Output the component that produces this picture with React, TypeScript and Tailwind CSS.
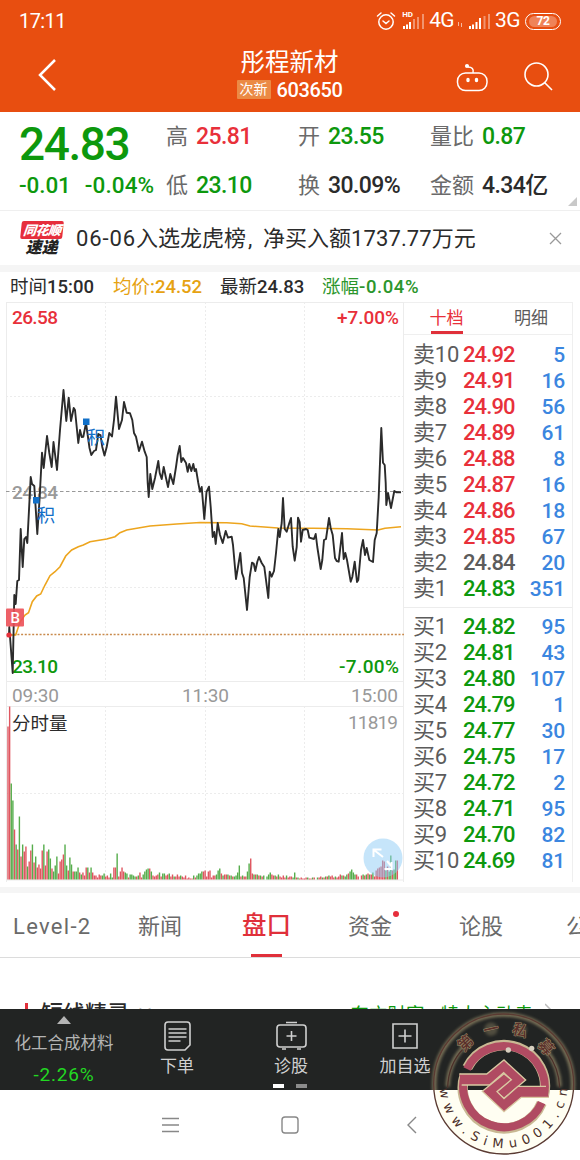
import { clsx } from "clsx";

interface Level {
    label: string,
    price: string,
    volume: string,
    tone: string,
}

const RED = "text-[#e8303a]";
const GREEN = "text-[#0d980d]";
const GRAY = "text-[#5c5c5c]";

const sells: Level[] = [
    { label: "卖10", price: "24.92", volume: "5", tone: RED },
    { label: "卖9", price: "24.91", volume: "16", tone: RED },
    { label: "卖8", price: "24.90", volume: "56", tone: RED },
    { label: "卖7", price: "24.89", volume: "61", tone: RED },
    { label: "卖6", price: "24.88", volume: "8", tone: RED },
    { label: "卖5", price: "24.87", volume: "16", tone: RED },
    { label: "卖4", price: "24.86", volume: "18", tone: RED },
    { label: "卖3", price: "24.85", volume: "67", tone: RED },
    { label: "卖2", price: "24.84", volume: "20", tone: GRAY },
    { label: "卖1", price: "24.83", volume: "351", tone: GREEN },
];

const buys: Level[] = [
    { label: "买1", price: "24.82", volume: "95", tone: GREEN },
    { label: "买2", price: "24.81", volume: "43", tone: GREEN },
    { label: "买3", price: "24.80", volume: "107", tone: GREEN },
    { label: "买4", price: "24.79", volume: "1", tone: GREEN },
    { label: "买5", price: "24.77", volume: "30", tone: GREEN },
    { label: "买6", price: "24.75", volume: "17", tone: GREEN },
    { label: "买7", price: "24.72", volume: "2", tone: GREEN },
    { label: "买8", price: "24.71", volume: "95", tone: GREEN },
    { label: "买9", price: "24.70", volume: "82", tone: GREEN },
    { label: "买10", price: "24.69", volume: "81", tone: GREEN },
];

const priceLine = "9,635 9.3,627 12.7,673 14.3,595 15.7,604 17.3,581 19,580 20.7,529 22.7,567 24.3,539 26,537 27.3,543 30.7,477 32,484 34.3,486 37.3,534 39.5,500 42,452.7 43.7,468 47,436 49.3,453 51.7,467 53.5,442 57,470 60,430 63.5,390 66.3,421 68.7,397.7 71,421 73.7,408 75,410 78.3,443 80,430 81.7,437 83.3,436.7 86,423 89.5,448 91.3,455 94,451 96,450 98.3,434 100.5,435 102.3,447 104.5,455.5 106.7,447 109.3,433 112,436.5 114,420 116,396.7 119,429 122,420 124,402 126.7,412.7 130,413.3 132.3,420 134,433 136,436.7 139,451 142,441.7 144.7,451.7 146.7,457 147.7,483 148.7,497 150.3,474 152.3,489 155,478 158.3,461 159.7,473 161.7,479 163.7,467 166,478 168,487 170.3,474 173.3,484 176,467 177.7,455 179.7,446 181.3,462 183,458 186,463 187.7,471.7 189.3,464 191.3,471 193.3,464 194.7,471 196,469 198.3,483 200,491.7 201.7,487 204.3,519 206.5,492 209,486.7 210.7,507 212.7,537 214.3,532 215.7,544 217.7,523 220,535 222.7,543 225.7,531 228,537.7 231.7,536.7 233,545 236,579 240.3,553 242,573 243.7,578 247,610 249.7,577 252,562.7 253.7,563.5 255.3,571 257.3,561.7 259,557 261.7,563 264.3,567 266,580 268.3,598 269.7,571.7 271.7,576.7 274,571 276,553 278.3,529 279.7,537 281.7,523 283,498 284.7,529 286.7,531.7 289.3,523 291,518 292.7,546.7 294.7,560.7 296.7,547 298,517.7 299.7,522 301,541.7 302.7,530 306,529 307.7,530 309.3,537.7 314,539 315.7,534 317.3,547 320.7,569 322.3,560 324,540 326,539 329,518 330.7,528 332.7,535 335,558 336.7,561 338.7,561.7 342,533 343.7,559 345.3,553 347,560 350.7,581.7 352.3,577 354.7,561.7 357,582 358.3,580 361,550 363,540 365,555 366.7,548 369.3,560 373,562 374.7,540 376.7,533 378.7,497 381.3,428 383,462.7 384.7,465 385.7,483 386.3,505 388,493 391,508 394.3,491 396.7,492.3 401,492.3";

const averageLine = "9,635 15.7,635 20,622 25,615 28.5,612.7 32.3,601.7 36.7,596 40.7,594 45,585 50,575.7 55,571.7 60,566.7 65.7,556 71.7,550 78.3,546.7 83.3,545 90,541.7 106.7,539 115,536.7 120,532.7 126.7,530 150,526 176.7,524 200,522.5 226.7,522.7 241.7,523.7 250,526 278,528 313,528.3 347,528.7 378,530 385,528.3 401,526.7";

// one entry per minute, negative means the minute closed lower
const volumes = [
    153, 173, -96, -79, 50, -35, 30, -63, 23, -35, 28, 33, -13, 18, 29, -35, 17, -23, 12, 15,
    11, 29, -35, 14, 28, -30, -21, 11, -8, -14, -23, 6, 18, 20, 25, -35, -14, 9, -22, -15,
    8, -8, -8, -12, 7, -5, 7, 4, 12, -12, 7, -12, 7, 4, 4, 2, 5, 4, -4, -6,
    3, 4, 2, -6, -2, 12, 12, -26, 3, 8, 12, 8, -7, -6, 2, -5, -5, -4, -3, 3,
    -4, 7, 2, -5, -8, -10, -11, 11, -8, 4, 3, 4, 5, -7, 3, -6, -6, 4, 5, -6,
    3, 5, -3, 3, 5, 3, -4, 3, 2, 4, 1, 2, 1, 1, -4, 2, -4, -6, -6, -8,
    8, 9, 3, 8, 9, 2, 4, 4, -5, -9, -11, 6, -4, 5, 5, -5, 4, -4, 3, -3,
    -4, -7, -14, 3, -4, 3, 3, -8, -16, 21, 6, -5, 5, -5, 4, -4, 3, -4, 0, -3,
    -5, -7, 5, 4, -4, 3, -5, 3, 2, 4, 2, -4, 2, 3, 3, -2, -7, 2, -2, 1,
    2, 1, 1, 2, -2, 1, 1, -2, 2, 0, -2, 2, 3, -2, 2, -3, 3, -4, 3, 4,
    2, -3, 2, 3, 5, -4, 4, -3, -5, 6, -8, -10, -7, -5, 5, 3, 0, 4, -5, 4,
    -5, 6, -5, 5, -7, 3, 9, 11, 12, 13, 19, 18, -9, 13, -8, -24, 9, -10, -19, 19,
];

const StatusBar = () => (
    <div className="flex h-[42px] items-center pr-[19px] pl-[19px] text-white">
        <span className="text-[20px] tracking-[-0.6px]">17:11</span>
        <svg className="ml-auto" width="20" height="20" viewBox="0 0 20 20" fill="none" stroke="white" strokeWidth="1.5" strokeLinecap="round">
            <circle cx="10" cy="11" r="7.2" />
            <path d="M1.500 5 5 2M18.500 5 15 2M7 10l3 2.600 3-2.600" />
        </svg>
        <div className="relative ml-[6px] h-[20px] w-[23px]">
            <span className="absolute -top-[1px] left-0 text-[8px] leading-[9px] font-bold">HD</span>
            <svg className="absolute bottom-[2px] left-0" width="23" height="15" viewBox="0 0 23 15" fill="white">
                <path d="M1 12h2v3H1zM4 10.500h2V15H4zM7 8h2v7H7z" />
                <path opacity=".4" d="M11 5h2v10h-2zM15 3h2v12h-2zM20 0h2v15h-2z" />
            </svg>
        </div>
        <span className="ml-[4px] text-[21px] tracking-[-0.6px]">4G</span>
        <svg className="mt-[6px] ml-[3px]" width="7" height="7" viewBox="0 0 7 7" stroke="white" opacity=".6">
            <path d="M1.500 1v4M4.500 2v4" />
        </svg>
        <svg className="ml-[4px]" width="23" height="15" viewBox="0 0 23 15" fill="white">
            <path d="M1 12h2v3H1zM4 10.500h2V15H4zM7.500 8h2v7h-2zM11 4h2v11h-2z" />
            <path opacity=".4" d="M15.500 2h2v13h-2zM20 0h2v15h-2z" />
        </svg>
        <span className="ml-[4px] text-[21px] tracking-[-0.6px]">3G</span>
        <div className="ml-[5px] flex h-[17px] w-[36px] items-center justify-center rounded-full border-[1.5px] border-white">
            <span className="flex h-[11px] w-[28px] items-center justify-center rounded-full bg-white/30 text-[12px] font-bold tracking-[-0.5px]">72</span>
        </div>
    </div>
);

const TitleBar = () => (
    <div className="flex h-[70px] items-start pr-[27px] pl-[37px] text-white">
        <svg className="mt-[17px]" width="19" height="32" viewBox="0 0 19 32" fill="none" stroke="white" strokeWidth="2.500">
            <path d="M18 1 3 16l15 15" />
        </svg>
        <div className="ml-[180px] flex w-[107px] flex-col items-center whitespace-nowrap">
            <h1 className="mt-[6px] text-[24.5px] leading-[30px] font-normal">彤程新材</h1>
            <div className="flex h-[23px] items-center">
                <span className="mr-[6px] flex h-[19px] w-[34px] items-center justify-center rounded-[1px] bg-[#eb8a45] text-[14px]">次新</span>
                <span className="text-[20px] font-medium tracking-[-0.4px]">603650</span>
            </div>
        </div>
        <div className="mt-[20px] ml-auto flex gap-[36px]">
            <svg width="32" height="30" viewBox="0 0 32 30" fill="none" stroke="white" strokeWidth="1.500">
                <rect x="1.500" y="11" width="29.500" height="17.500" rx="8" />
                <path d="M17 11c1-4-1-6-5-6" />
                <circle cx="11" cy="4" r="1.300" fill="white" />
                <ellipse cx="12" cy="18" rx="1" ry="1.500" fill="white" />
                <ellipse cx="20.500" cy="18" rx="1" ry="1.500" fill="white" />
            </svg>
            <svg width="29" height="29" viewBox="0 0 29 29" fill="none" stroke="white" strokeWidth="1.600">
                <circle cx="12.500" cy="12.500" r="11.500" />
                <path d="m20.500 20.500 7.500 7.500" />
            </svg>
        </div>
    </div>
);

const Stat = ({ label, value, tone }: { label: string, value: string, tone: string }) => (
    <div className="flex items-center gap-[8px] whitespace-nowrap">
        <span className="text-[22px] text-[#6a6a6a]">{label}</span>
        <span className={clsx("mt-[2px] text-[23px] font-medium tracking-[-0.6px]", tone)}>{value}</span>
    </div>
);

const Quote = () => (
    <section className="relative flex h-[98px] pl-[19px]">
        <div className="w-[147px]">
            <div className={clsx("mt-[8px] h-[49px] text-[46px] leading-[48px] font-medium tracking-[-1.4px]", GREEN)}>24.83</div>
            <div className={clsx("flex h-[33px] items-center gap-[14px] text-[22.5px] font-medium whitespace-nowrap", GREEN)}>
                <span className="tracking-[-0.1px]">-0.01</span>
                <span className="tracking-[0.1px]">-0.04%</span>
            </div>
        </div>
        <div className="grid grid-cols-[132px_132px_130px] grid-rows-[49px_49px] items-center">
            <Stat label="高" value="25.81" tone={RED} />
            <Stat label="开" value="23.55" tone={GREEN} />
            <Stat label="量比" value="0.87" tone={GREEN} />
            <Stat label="低" value="23.10" tone={GREEN} />
            <Stat label="换" value="30.09%" tone="text-[#2b2b2b]" />
            <Stat label="金额" value="4.34亿" tone="text-[#2b2b2b]" />
        </div>
        <svg className="absolute right-[3px] bottom-[4px]" width="9" height="9" viewBox="0 0 9 9">
            <path d="M9 0v9H0z" fill="#c9c9c9" />
        </svg>
    </section>
);

const News = () => (
    <section className="flex h-[55px] items-center border-t border-[#efefef] pr-[18px] pl-[20px]">
        <div className="flex w-[43px] flex-col items-center leading-none font-black italic">
            <span className="flex h-[18px] w-[42px] -skew-x-6 items-center justify-center rounded-[2px] bg-[#e62e3c] text-[13px] tracking-[-0.5px] text-white">同花顺</span>
            <span className="mt-[1px] text-[16px] text-[#222]">速递</span>
        </div>
        <p className="ml-[13px] text-[22px] whitespace-nowrap text-[#2b2b2b]">
            <span className="tracking-[0.9px]">06-06</span>入选龙虎榜<span className="inline-block w-[17px] pl-[2px]">,</span>净买入额<span className="tracking-[0.1px]">1737.77</span>万元
        </p>
        <svg className="ml-auto" width="13" height="13" viewBox="0 0 13 13" stroke="#999" strokeWidth="1.300">
            <path d="m1 1 11 11M12 1 1 12" />
        </svg>
    </section>
);

const Summary = () => (
    <div className="flex h-[30px] items-center pt-[2px] pl-[10px] text-[18.5px] whitespace-nowrap text-[#2b2b2b]">
        <span className="w-[103px]">时间<b className="font-medium">15:00</b></span>
        <span className="w-[107px] text-[#e6a212]">均价<b className="font-medium">:24.52</b></span>
        <span className="w-[102px]">最新<b className="font-medium">24.83</b></span>
        <span className="text-[#2c962c]">涨幅<b className="font-medium tracking-[0.6px]">-0.04%</b></span>
    </div>
);

const Chart = () => (
    <svg className="block shrink-0" width="404" height="580" viewBox="0 302 404 580" fontSize="19" fontWeight="500">
        <g stroke="#ececec" fill="none">
            <path d="M6 302.500H404M6 681.500H404M6 706.500H404M6 880H404M6.500 302V882M403.500 302V882" />
            <path strokeDasharray="2 2" d="M6 396.500H404M6 587.500H404M6 793.500H404M105.500 302V681M205.500 302V681M304.500 302V681M105.500 706V880M205.500 706V880M304.500 706V880" />
        </g>
        <path d="M6 491.500H403" stroke="#999" strokeDasharray="3.500 2.500" />
        <path d="M10 634.500H404" stroke="#c98a4c" strokeWidth="1.300" strokeDasharray="2 1.700" />
        <text x="12" y="324" fill="#e8303a" textLength="46">26.58</text>
        <text x="337" y="324" fill="#e8303a" textLength="62" lengthAdjust="spacingAndGlyphs">+7.00%</text>
        <text x="12" y="499" fill="#9a9a9a" textLength="46">24.84</text>
        <text x="12" y="673" fill="#0d980d" textLength="46">23.10</text>
        <text x="339" y="673" fill="#0d980d" textLength="60">-7.00%</text>
        <text x="12" y="702" fill="#999" fontWeight="400" textLength="47">09:30</text>
        <text x="182" y="702" fill="#999" fontWeight="400" textLength="47">11:30</text>
        <text x="351" y="702" fill="#999" fontWeight="400" textLength="47">15:00</text>
        <polyline points={averageLine} fill="none" stroke="#eda51e" strokeWidth="1.600" />
        <polyline points={priceLine} fill="none" stroke="#2b2b2b" strokeWidth="1.900" strokeLinejoin="round" />
        <g fill="#1270c8" fontWeight="400">
            <rect x="83" y="418.500" width="6.500" height="6.500" />
            <text x="87" y="444" fontSize="18">积</text>
            <rect x="33" y="497" width="6.500" height="6.500" />
            <text x="37" y="522" fontSize="18">积</text>
        </g>
        <rect x="6" y="608.500" width="18" height="18" rx="1" fill="#ec5058" fillOpacity=".9" />
        <text x="10.500" y="623" fill="white" fontSize="15">B</text>
        <circle cx="9" cy="635" r="2.600" fill="#e8303a" />
        {volumes.map((v, i) => (
            <rect key={i} x={7.300 + i * 1.629} y={879.500 - Math.abs(v)} width="1.400" height={Math.abs(v)} fill={v < 0 ? "#56ad4c" : "#df5660"} />
        ))}
        <text x="12" y="730" fill="#2b2b2b" fontWeight="400" fontSize="18.500">分时量</text>
        <text x="348" y="729" fill="#999" fontWeight="400" textLength="50">11819</text>
        <circle cx="383" cy="858" r="19.500" fill="#8ecbf6" fillOpacity=".5" />
        <path d="M383 857l-9-7M373.500 857v-7.500h8M387 861l5 6M384.500 869h7v-7" stroke="white" strokeWidth="2" fill="none" />
    </svg>
);

const LevelRow = ({ label, price, volume, tone }: Level) => (
    <div className="flex h-[26px] items-center text-[22px] leading-[26px]">
        <span className="w-[50px] tracking-[-0.2px] whitespace-nowrap text-[#5c5c5c]">{label}</span>
        <span className={clsx("font-medium tracking-[-0.9px]", tone)}>{price}</span>
        <span className="ml-auto text-[21px] font-medium tracking-[-0.2px] text-[#3b86e0]">{volume}</span>
    </div>
);

const OrderBook = () => (
    <aside className="h-[580px] w-[169px] border-r border-[#efefef]">
        <div className="flex h-[33px] border-y border-[#efefef] pl-[26px] text-[17px]">
            <div className="relative flex h-full w-[33px] items-center justify-center whitespace-nowrap text-[#e8303a]">
                十档
                <i className="absolute bottom-0 h-[3px] w-[32px] bg-[#e0303a]" />
            </div>
            <div className="ml-[51px] flex items-center text-[#5c5c5c]">明细</div>
        </div>
        <div className="mt-[7px] h-[266px] border-b border-[#ececec] pr-[7px] pl-[9px]">
            {sells.map(l => <LevelRow key={l.label} {...l} />)}
        </div>
        <div className="mt-[6px] pr-[7px] pl-[9px]">
            {buys.map(l => <LevelRow key={l.label} {...l} />)}
        </div>
    </aside>
);

const Tabs = () => (
    <nav className="flex h-[65px] items-center overflow-hidden border-b border-[#dcdcdc] pt-[2px] pl-[13px] text-[22px] whitespace-nowrap text-[#6a6a6a]">
        <span className="w-[125px] shrink-0 tracking-[1.3px]">Level-2</span>
        <span className="w-[104px] shrink-0">新闻</span>
        <span className="relative flex h-full w-[106px] shrink-0 items-center text-[24.5px] font-medium text-[#e0303a]">
            盘口
            <i className="absolute bottom-0 left-[9px] h-[3px] w-[31px] bg-[#e0303a]" />
        </span>
        <span className="relative w-[111px] shrink-0">
            资金
            <i className="absolute top-[1px] left-[45px] size-[6px] rounded-full bg-[#e62e3c]" />
        </span>
        <span className="w-[107px] shrink-0">论股</span>
        <span className="shrink-0">公告</span>
    </nav>
);

const Teaser = () => (
    <div className="flex h-[51px] items-start overflow-hidden pr-[26px] pl-[25px] whitespace-nowrap">
        <i className="mt-[45px] h-[22px] w-[3px] bg-[#e0303a]" />
        <span className="mt-[41px] ml-[13px] text-[22px] leading-[30px] font-medium text-[#2b2b2b]">短线精灵</span>
        <span className="mt-[41px] ml-[10px] text-[12px] leading-[30px] text-[#aaa]">﹀</span>
        <span className="mt-[42px] ml-auto text-[18.5px] leading-[30px] text-[#0d980d]">东方财富</span>
        <span className="mt-[42px] ml-[16px] text-[18.5px] leading-[30px] text-[#0d980d]">特大主动卖</span>
        <svg className="mt-[45px] ml-[12px]" width="9" height="18" viewBox="0 0 9 18" fill="none" stroke="#bbb" strokeWidth="1.500">
            <path d="m0 1 8 8-8 8" />
        </svg>
    </div>
);

const ActionBar = () => (
    <div className="relative flex h-[81px] bg-[#222423] text-[17px] text-[#d0d0d0]">
        <div className="flex w-[128px] flex-col items-center">
            <svg className="mt-[7px]" width="14" height="8" viewBox="0 0 14 8"><path d="M7 0l7 8H0z" fill="#b4b4b4" /></svg>
            <span className="mt-[7px] text-[16.5px] leading-[25px] text-[#b4b4b4]">化工合成材料</span>
            <span className="mt-[6px] text-[19px] leading-[26px] tracking-[0.8px] text-[#22d822]">-2.26%</span>
        </div>
        <div className="flex w-[98px] flex-col items-center">
            <svg className="mt-[12px]" width="27" height="30" viewBox="0 0 27 30" fill="none" stroke="#d0d0d0" strokeWidth="1.600">
                <path d="M4 1h19q3 0 3 3v20l-5 5H4q-3 0-3-3V4q0-3 3-3z" />
                <path d="M4.500 8h18M4.500 12h18M4.500 16h18M4.500 20h12" />
            </svg>
            <span className="mt-[3px] leading-[24px]">下单</span>
        </div>
        <div className="flex w-[130px] flex-col items-center">
            <svg className="mt-[12px]" width="31" height="30" viewBox="0 0 31 30" fill="none" stroke="#d0d0d0" strokeWidth="1.600">
                <rect x="1" y="4" width="29" height="22" rx="3" />
                <path d="M10 1.500h11M15.500 10v10M10.500 15h10M6 28h4M21 28h4" />
            </svg>
            <span className="mt-[3px] leading-[24px]">诊股</span>
        </div>
        <div className="flex w-[98px] flex-col items-center">
            <svg className="mt-[13px]" width="26" height="28" viewBox="0 0 26 28" fill="none" stroke="#d0d0d0" strokeWidth="1.600">
                <path d="M1 2h24v24H1zM13 7.500v13M6.500 14h13" />
            </svg>
            <span className="mt-[4px] leading-[24px] whitespace-nowrap">加自选</span>
        </div>
        <div className="absolute bottom-[2px] left-[273px] flex gap-[12px]">
            <i className="h-[4px] w-[11px] bg-white" />
            <i className="h-[4px] w-[11px] bg-[#8c8c8c]" />
        </div>
    </div>
);

const SystemNav = () => (
    <div className="flex h-[69px] items-center pl-[162px]">
        <svg width="17" height="16" viewBox="0 0 17 16" stroke="#888" strokeWidth="1.300">
            <path d="M0 1.500h17M0 8h17M0 14.500h17" />
        </svg>
        <svg className="ml-[102px]" width="18" height="18" viewBox="0 0 18 18" fill="none" stroke="#888" strokeWidth="1.400">
            <rect x="1" y="1" width="16" height="16" rx="3" />
        </svg>
        <svg className="ml-[107px]" width="12" height="18" viewBox="0 0 12 18" fill="none" stroke="#888" strokeWidth="1.400">
            <path d="M10 1 2 9l8 8" />
        </svg>
    </div>
);

const sealChars = [
    { char: "第", angle: -43 },
    { char: "一", angle: -13 },
    { char: "私", angle: 17 },
    { char: "募", angle: 49 },
];

const Seal = () => (
    <svg className="absolute top-[1005px] left-[425px]" width="155" height="155" viewBox="0 0 465 465">
        <defs>
            <path id="arcBottom" d="M44 237a192 192 0 0 0 384 0" />
            <clipPath id="upper"><rect width="465" height="255" /></clipPath>
            <clipPath id="lower"><rect y="255" width="465" height="210" /></clipPath>
            <filter id="glow"><feGaussianBlur stdDeviation="4" /></filter>
        </defs>
        <circle cx="236" cy="237" r="210" fill="#fffef2" clipPath="url(#lower)" />
        <g clipPath="url(#upper)">
            <g fill="none" stroke="#8a8062" strokeWidth="13" opacity=".85" filter="url(#glow)">
                <circle cx="236" cy="237" r="208" />
                <path d="M68 245q2-70 48-118M404 245q-2-60-38-106" />
            </g>
            <path d="M68 248q2-70 48-118M404 248q-2-60-38-106" fill="none" stroke="#4c302a" strokeWidth="4" />
        </g>
        <circle cx="236" cy="237" r="210" fill="none" stroke="#5a3a32" strokeWidth="4" />
        <g fill="none" stroke="#c9b893" strokeWidth="31">
            <path d="M127 188a123 123 0 0 1 229 86" />
            <path d="M119 210a123 123 0 0 0 231 84" />
        </g>
        <g fill="none" stroke="#b04b62" strokeWidth="24">
            <path d="M126 192a123 123 0 0 1 230 83" />
            <path d="M119 210a123 123 0 0 0 231 83" />
        </g>
        <g fill="#b04b62" stroke="#d9c9a2" strokeWidth="4">
            <path d="M103 207h82l52-42 65 60-65 55-23-20 43-36-21-21-42 37h-84" />
            <path d="M371 277h-82l-52 43-65-61 65-53 22 18-43 36 21 21 42-37h84" />
        </g>
        <circle cx="250" cy="135" r="8" fill="#d8d0c0" />
        <circle cx="320" cy="130" r="8" fill="#d8d0c0" />
        {sealChars.map(({ char, angle }) => (
            <g key={char} transform={`rotate(${angle} 236 237)`} fontSize="46" fontWeight="500" textAnchor="middle">
                <circle cx="236" cy="68" r="20" fill="#8a8062" opacity=".45" filter="url(#glow)" />
                <text x="236" y="85" fill="#5a2f2a" stroke="#9a8a68" strokeWidth="3" paintOrder="stroke">{char}</text>
            </g>
        ))}
        <text className="font-['DejaVu_Sans']" fill="#4c302a" fontSize="39">
            <textPath href="#arcBottom" startOffset="14" textLength="575">www.SiMu001.cn</textPath>
        </text>
    </svg>
);

const App = () => {
    return (
        <main className="relative h-[1160px] w-[580px] overflow-hidden bg-white font-[Roboto,'Noto_Sans_CJK_SC',sans-serif]">
            <header className="h-[112px] bg-[#e84e10]">
                <StatusBar />
                <TitleBar />
            </header>
            <Quote />
            <News />
            <div className="h-[7px] bg-[#f5f5f5]" />
            <Summary />
            <div className="flex h-[585px]">
                <Chart />
                <OrderBook />
            </div>
            <div className="h-[6px] bg-[#f5f5f5]" />
            <Tabs />
            <Teaser />
            <ActionBar />
            <SystemNav />
            <Seal />
        </main>
    );
};

export default App;
